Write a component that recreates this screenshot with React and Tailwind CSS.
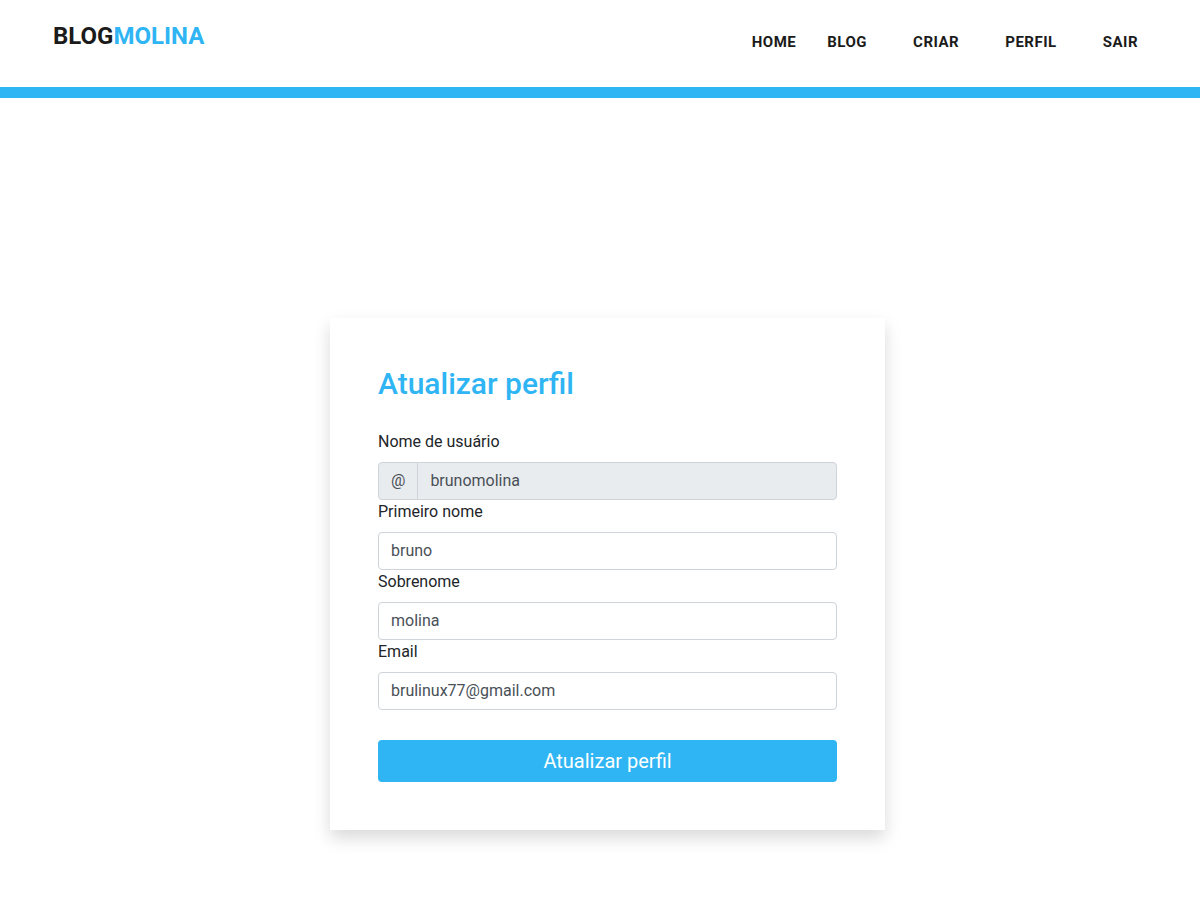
const links = [
  { label: "HOME", className: "mr-[31px]" },
  { label: "BLOG", className: "mr-[46px]" },
  { label: "CRIAR", className: "mr-[46px]" },
  { label: "PERFIL", className: "mr-[46px]" },
  { label: "SAIR", className: "" },
];

const inputClass =
  "h-[38px] w-full rounded border border-[#ced4da] bg-white px-3 pb-[7px] pt-[5px] text-base leading-6 text-[#495057] outline-none focus:border-[#2fb5f3]";

function Field({ id, label, type = "text", value }) {
  return (
    <div>
      <label htmlFor={id} className="mb-2 block">{label}</label>
      <input id={id} name={id} type={type} defaultValue={value} className={inputClass} />
    </div>
  );
}

export default function App() {
  return (
    <div className="bg-white font-[Roboto,sans-serif] text-base leading-6 text-[#212529]">
      <header className="flex h-[98px] items-start justify-between border-b-[11px] border-[#2fb5f3] pl-[53px] pr-[62px]">
        <a href="#inicio" className="mt-[18px] text-2xl leading-9 font-bold text-[#1b1b1b]">
          BLOG<span className="text-[#2fb5f3]">MOLINA</span>
        </a>
        <nav className="mt-[30px] flex">
          {links.map(({ label, className }) => (
            <a key={label} href={"#" + label.toLowerCase()} className={"text-[15px] leading-6 font-bold tracking-[0.5px] text-[#1b1b1b] " + className}>
              {label}
            </a>
          ))}
        </nav>
      </header>
      <main className="flex justify-center pb-[84px] pl-[15px] pt-[220px]">
        <form className="w-full max-w-[555px] bg-white p-12 shadow-[0_8px_16px_rgba(0,0,0,0.15)]" onSubmit={(e) => e.preventDefault()}>
          <h1 className="mb-7 text-[30px] leading-9 font-medium text-[#2fb5f3]">Atualizar perfil</h1>
          <label htmlFor="username" className="mb-2 block">Nome de usuário</label>
          <div className="flex h-[38px] rounded border border-[#ced4da] bg-[#e9ecef] text-[#495057]">
            <span className="border-r border-[#ced4da] px-3 py-[6px]">@</span>
            <input id="username" readOnly value="brunomolina" className="min-w-0 flex-1 bg-transparent px-3 py-[6px] outline-none" />
          </div>
          <Field id="first-name" label="Primeiro nome" value="bruno" />
          <Field id="last-name" label="Sobrenome" value="molina" />
          <Field id="email" label="Email" type="email" value="brulinux77@gmail.com" />
          <button type="submit" className="mt-[30px] h-[42px] w-full cursor-pointer rounded bg-[#2fb5f3] text-xl leading-[30px] text-white">
            Atualizar perfil
          </button>
        </form>
      </main>
    </div>
  );
}
